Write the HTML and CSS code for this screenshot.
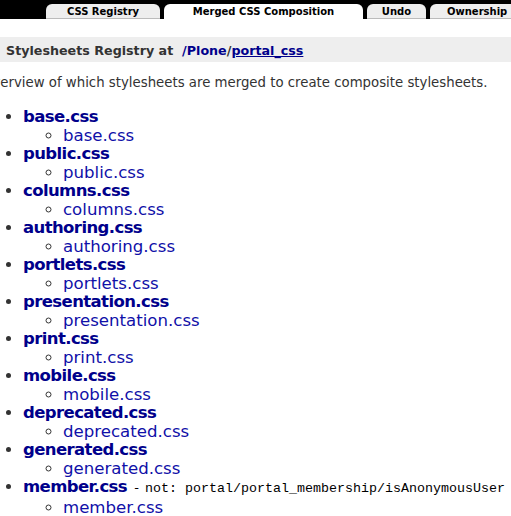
FILE: index.html
```html
<!DOCTYPE html>
<html>
<head>
<meta charset="utf-8">
<link rel="stylesheet" href="styles.css">
</head>
<body>
<div class="tabbar">
  <div class="tab t1">CSS Registry</div>
  <div class="tab t2 active">Merged CSS Composition</div>
  <div class="tab t3">Undo</div>
  <div class="tab t4">Ownership</div>
</div>
<div class="header">Stylesheets Registry at&nbsp; <a class="plain" href="#">/Plone</a>/<a class="ul" href="#">portal_css</a></div>
<p class="intro">Overview of which stylesheets are merged to create composite stylesheets.</p>
<ul class="outer">
  <li><a href="#">base.css</a><ul class="inner"><li><a href="#">base.css</a></li></ul></li>
  <li><a href="#">public.css</a><ul class="inner"><li><a href="#">public.css</a></li></ul></li>
  <li><a href="#">columns.css</a><ul class="inner"><li><a href="#">columns.css</a></li></ul></li>
  <li><a href="#">authoring.css</a><ul class="inner"><li><a href="#">authoring.css</a></li></ul></li>
  <li><a href="#">portlets.css</a><ul class="inner"><li><a href="#">portlets.css</a></li></ul></li>
  <li><a href="#">presentation.css</a><ul class="inner"><li><a href="#">presentation.css</a></li></ul></li>
  <li><a href="#">print.css</a><ul class="inner"><li><a href="#">print.css</a></li></ul></li>
  <li><a href="#">mobile.css</a><ul class="inner"><li><a href="#">mobile.css</a></li></ul></li>
  <li><a href="#">deprecated.css</a><ul class="inner"><li><a href="#">deprecated.css</a></li></ul></li>
  <li><a href="#">generated.css</a><ul class="inner"><li><a href="#">generated.css</a></li></ul></li>
  <li><a href="#">member.css</a> <span class="cond">- <code>not: portal/portal_membership/isAnonymousUser</code></span><ul class="inner"><li><a href="#">member.css</a></li></ul></li>
</ul>
</body>
</html>
```
FILE: styles.css
```css
html, body {
  margin: 0;
  padding: 0;
  background: #fff;
  overflow: hidden;
}
body {
  font-family: "DejaVu Sans", Verdana, sans-serif;
  color: #333;
}
.tabbar {
  background: #000;
  height: 19px;
  display: flex;
  align-items: flex-end;
  padding-left: 46px;
  gap: 4px;
  white-space: nowrap;
  overflow: hidden;
}
.tab {
  height: 14px;
  background: #eee;
  border-bottom: 1px solid #bbb;
  border-radius: 6px 6px 0 0;
  font-size: 10px;
  font-weight: bold;
  color: #000;
  text-align: center;
  line-height: 16px;
  flex: none;
}
.tab.active {
  background: #fff;
  border-bottom-color: #fff;
}
.t1 { width: 114px; }
.t2 { width: 199px; }
.t3 { width: 59px; }
.t4 { width: 90px; text-align: left; padding-left: 17px; }
.header {
  margin-top: 18px;
  background: #eee;
  height: 25px;
  line-height: 28px;
  padding-left: 6px;
  font-size: 12.7px;
  font-weight: bold;
  color: #333;
  white-space: nowrap;
}
.header a {
  color: #00008b;
}
.header a.plain {
  text-decoration: none;
}
.header a.ul {
  text-decoration: underline;
}
.intro {
  margin: 11px 0 0 -18px;
  font-size: 13.3px;
  line-height: 19px;
  color: #333;
  white-space: nowrap;
}
.outer {
  margin: 16px 0 0 0;
  padding: 0 0 0 23px;
  list-style: disc;
  white-space: nowrap;
}
.outer > li {
  font-size: 16.5px;
  line-height: 18.5px;
  font-weight: bold;
  letter-spacing: -0.6px;
}
.outer a {
  color: #00008b;
  text-decoration: none;
}
.inner {
  margin: 0;
  padding: 0 0 0 40px;
  list-style: circle;
}
.inner li {
  font-weight: normal;
  font-size: 16.6px;
  letter-spacing: 0;
}
.inner a {
  color: #1010a8;
}
.cond {
  font-weight: normal;
  font-size: 13px;
  color: #000;
  letter-spacing: 0;
  margin-left: 2px;
}
.cond code {
  font-family: "Liberation Mono", "DejaVu Sans Mono", monospace;
  font-size: 13.33px;
  margin-left: 2px;
}
```
